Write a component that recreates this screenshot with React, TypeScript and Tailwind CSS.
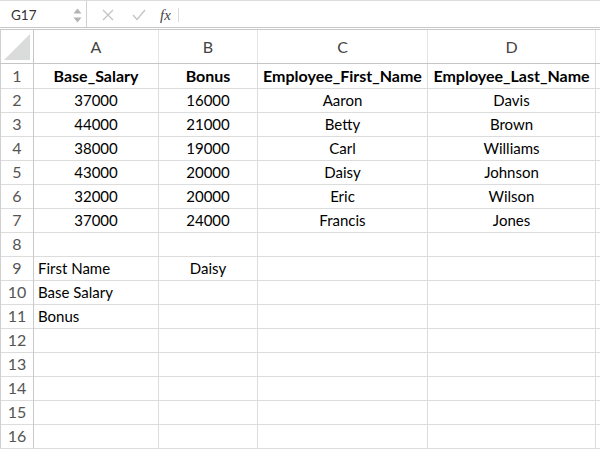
const cols = ["A", "B", "C", "D"];

type Cell = { v: string; bold?: boolean; left?: boolean };

const rows: Cell[][] = [
  [{ v: "Base_Salary", bold: true }, { v: "Bonus", bold: true }, { v: "Employee_First_Name", bold: true }, { v: "Employee_Last_Name", bold: true }],
  [{ v: "37000" }, { v: "16000" }, { v: "Aaron" }, { v: "Davis" }],
  [{ v: "44000" }, { v: "21000" }, { v: "Betty" }, { v: "Brown" }],
  [{ v: "38000" }, { v: "19000" }, { v: "Carl" }, { v: "Williams" }],
  [{ v: "43000" }, { v: "20000" }, { v: "Daisy" }, { v: "Johnson" }],
  [{ v: "32000" }, { v: "20000" }, { v: "Eric" }, { v: "Wilson" }],
  [{ v: "37000" }, { v: "24000" }, { v: "Francis" }, { v: "Jones" }],
  [{ v: "" }, { v: "" }, { v: "" }, { v: "" }],
  [{ v: "First Name", left: true }, { v: "Daisy" }, { v: "" }, { v: "" }],
  [{ v: "Base Salary", left: true }, { v: "" }, { v: "" }, { v: "" }],
  [{ v: "Bonus", left: true }, { v: "" }, { v: "" }, { v: "" }],
  [{ v: "" }, { v: "" }, { v: "" }, { v: "" }],
  [{ v: "" }, { v: "" }, { v: "" }, { v: "" }],
  [{ v: "" }, { v: "" }, { v: "" }, { v: "" }],
  [{ v: "" }, { v: "" }, { v: "" }, { v: "" }],
  [{ v: "" }, { v: "" }, { v: "" }, { v: "" }],
];

const gridCols = "grid grid-cols-[34px_125px_99px_170px_168px_1fr]";

function FormulaBar() {
  return (
    <div className="flex h-[28px] border-t border-[#dcdcdc] border-b border-b-[#c8c8c8]">
      <div className="flex w-[87px] items-center justify-between border-r border-[#cfcfcf] pl-[11px] pr-[4px] pt-[2px] text-[13.5px] text-[#333]">
        <span>G17</span>
        <div className="flex flex-col items-center gap-[3px]">
          <svg width="9" height="6" viewBox="0 0 9 6"><path d="M4.5 0.5 L8.5 5.5 H0.5 Z" fill="#b4b4b4" /></svg>
          <svg width="9" height="6" viewBox="0 0 9 6"><path d="M0.5 0.5 H8.5 L4.5 5.5 Z" fill="#b4b4b4" /></svg>
        </div>
      </div>
      <div className="flex flex-1 items-center pl-[15px] pt-[2px]">
        <svg width="12" height="12" viewBox="0 0 12 12" className="mr-[18px]">
          <path d="M1 1 L11 11 M11 1 L1 11" stroke="#c4c4c4" strokeWidth="1.3" />
        </svg>
        <svg width="14" height="12" viewBox="0 0 14 12" className="mr-[14px]">
          <path d="M1 6 L5 10.5 L13 1" stroke="#c4c4c4" strokeWidth="1.3" fill="none" />
        </svg>
        <span className="font-['Liberation_Serif',serif] text-[15px] italic text-[#444]">fx</span>
        <div className="ml-[7px] h-[14px] w-px bg-[#dadada]" />
      </div>
    </div>
  );
}

export default function App() {
  return (
    <div className="h-[450px] w-[600px] overflow-hidden bg-white font-['Lato','Noto_Sans',sans-serif]">
      <FormulaBar />
      <div className="h-[2px] border-b border-[#c8c8c8]" />
      <div className={`${gridCols} h-[34px] border-b border-[#c6c6c6]`}>
        <div className="relative border-r border-[#c6c6c6] border-l border-l-[#d0d0d0]">
          <svg className="absolute bottom-[3px] right-[3px]" width="26" height="26" viewBox="0 0 26 26">
            <path d="M26 0 L26 26 L0 26 Z" fill="#dadcdb" />
          </svg>
        </div>
        {cols.map((c) => (
          <div key={c} className="flex items-center justify-center border-r border-[#e4e4e4] text-[16px] text-[#444]">
            {c}
          </div>
        ))}
        <div />
      </div>
      {rows.map((r, i) => (
        <div key={i} className={`${gridCols} h-[24px]`}>
          <div className="flex items-center justify-center border-r border-b border-[#c9c9c9] border-b-[#dcdcdc] border-l border-l-[#d0d0d0] text-[16px] text-[#555]">
            {i + 1}
          </div>
          {r.map((c, j) => (
            <div
              key={j}
              className={`flex items-center border-r border-b border-[#dcdcdc] text-black ${
                c.left ? "justify-start pl-[4px]" : "justify-center"
              } ${c.bold ? "text-[16px] font-bold" : "text-[15px]"}`}
            >
              {c.v}
            </div>
          ))}
          <div className="border-b border-[#dcdcdc]" />
        </div>
      ))}
    </div>
  );
}
